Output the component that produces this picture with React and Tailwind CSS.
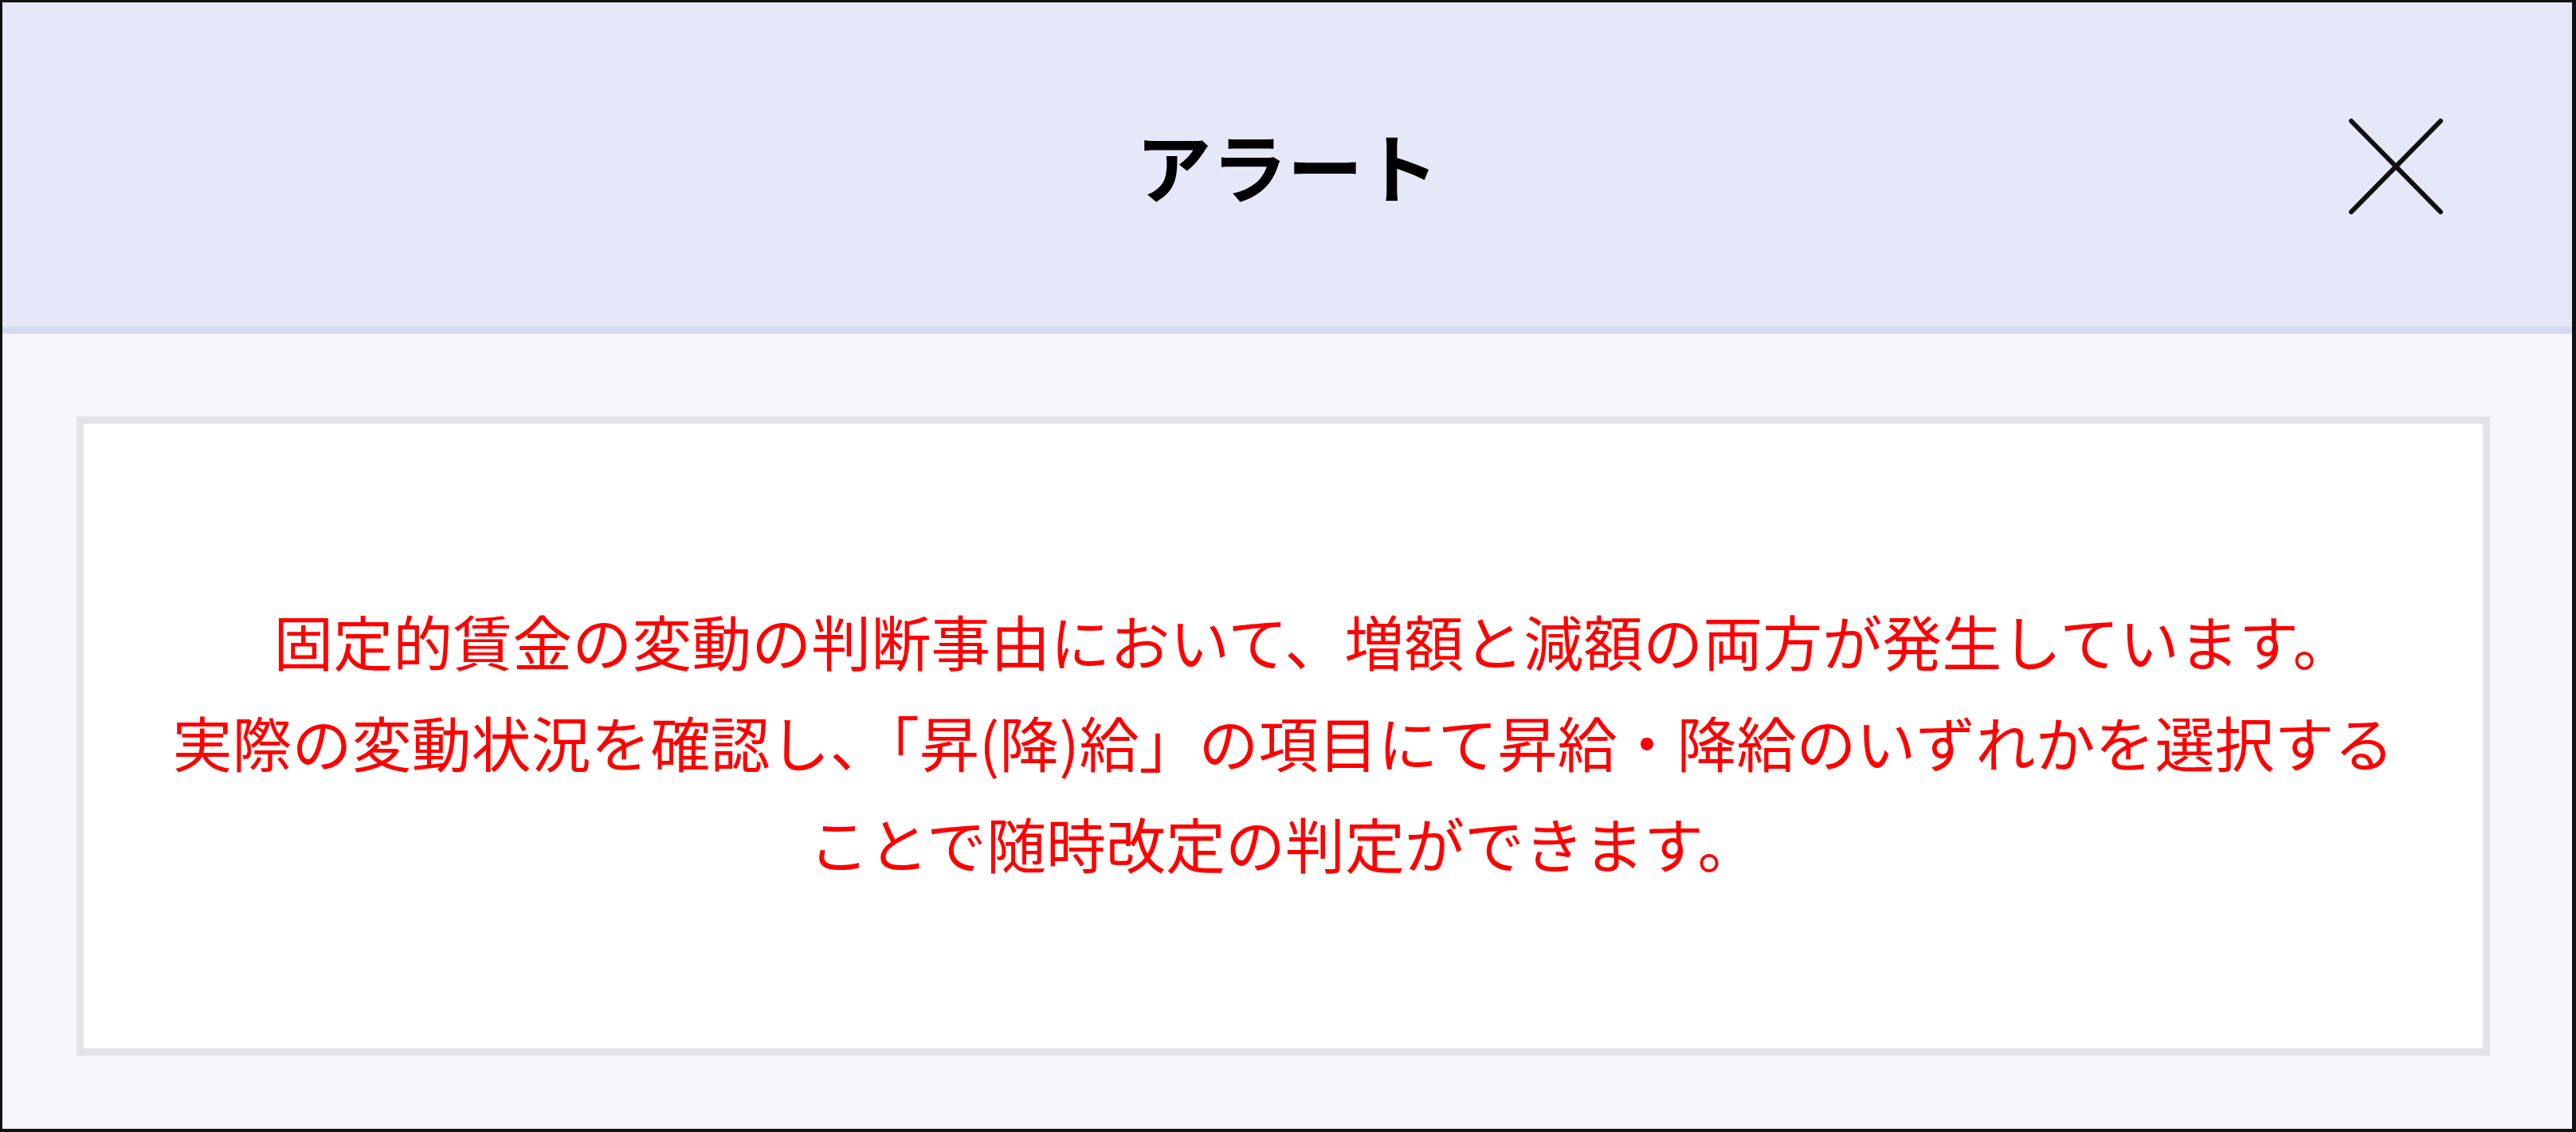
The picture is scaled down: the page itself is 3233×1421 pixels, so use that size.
export default function App() {
  const lines = [
    "　固定的賃金の変動の判断事由において、増額と減額の両方が発生しています。",
    "実際の変動状況を確認し、「昇(降)給」の項目にて昇給・降給のいずれかを選択する",
    "ことで随時改定の判定ができます。",
  ];

  return (
    <div
      className="flex h-[1421px] w-[3233px] flex-col border-t-[3px] border-l-[3px] border-r-[5px] border-b-[4px] border-[#111] bg-[#f6f6fb]"
      style={{ fontFamily: '"Noto Sans CJK JP", "Noto Sans", sans-serif' }}
    >
      {/* header bar */}
      <div className="grid h-[416px] grid-cols-[1fr_auto_1fr] items-center border-b-[9px] border-[#d4d9ef] bg-[#e4e8f8]">
        <div />
        <h2 className="text-[95px] font-bold leading-none text-black">アラート</h2>
        <div className="flex justify-end pr-[161px] pt-[4px]">
          <button type="button" aria-label="close" className="flex h-[122px] w-[120px] items-center justify-center">
            <svg width="120" height="122" viewBox="0 0 120 122" fill="none">
              <path d="M4 4L116 118M116 4L4 118" stroke="#111" strokeWidth="6" strokeLinecap="round" />
            </svg>
          </button>
        </div>
      </div>

      {/* message body */}
      <div className="flex flex-1 pl-[93px] pr-[103px] pt-[104px] pb-[92px]">
        <div className="flex flex-1 items-center justify-center border-[9px] border-[#e3e3e7] bg-white pt-[12px]">
          <div className="text-center text-[75px] leading-[127px] text-[#ff0000]">
            {lines.map((line) => (
              <p key={line} className="whitespace-pre">{line}</p>
            ))}
          </div>
        </div>
      </div>
    </div>
  );
}
